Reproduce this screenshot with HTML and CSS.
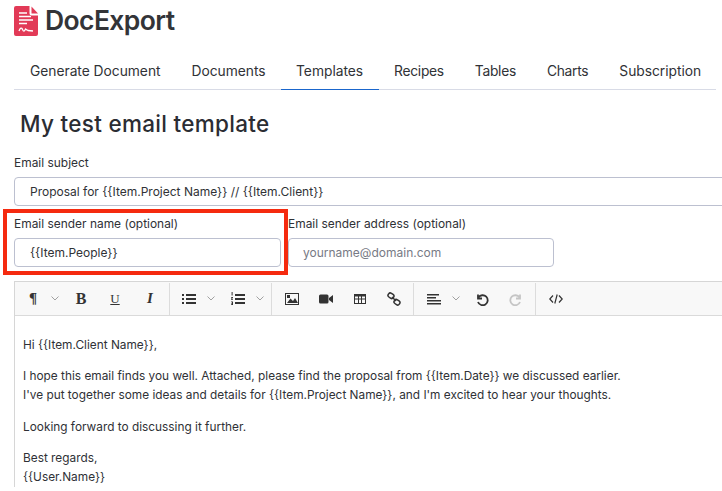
FILE: index.html
```html
<!DOCTYPE html>
<html lang="en">
<head>
<meta charset="utf-8">
<title>DocExport</title>
<link rel="stylesheet" href="styles.css">
</head>
<body>
<div class="page">
  <header class="brand">
    <svg class="logo" viewBox="0 0 24 30" aria-hidden="true">
      <path d="M2 0H15.5V7.5Q15.5 9.500 17.500 9.500H24V28Q24 30 22 30H2Q0 30 0 28V2Q0 0 2 0Z" fill="#e23a57"/>
      <path d="M17.500 0.500L24 7.500H17.500Z" fill="#e23a57"/>
      <path d="M5 7H13M5 10.500H17M5 14H19M5 17.500H13" stroke="#fff" stroke-width="1.500" fill="none"/>
      <path d="M5 25Q7 20 8.500 23.500T11.500 23Q13 24 14 24.500L19 25" stroke="#fff" stroke-width="1.300" fill="none"/>
    </svg>
    <span class="brand-name">DocExport</span>
  </header>

  <nav class="tabs">
    <a class="tab">Generate Document</a>
    <a class="tab">Documents</a>
    <a class="tab active">Templates</a>
    <a class="tab tight">Recipes</a>
    <a class="tab tight">Tables</a>
    <a class="tab tight">Charts</a>
    <a class="tab">Subscription</a>
  </nav>

  <h1 class="title">My test email template</h1>

  <div class="field subject">
    <label class="label">Email subject</label>
    <div class="input wide">Proposal for {{Item.Project Name}} // {{Item.Client}}</div>
  </div>

  <div class="sender-row">
    <div class="field sender">
      <label class="label">Email sender name (optional)</label>
      <div class="input">{{Item.People}}</div>
      <div class="highlight"></div>
    </div>
    <div class="field sender">
      <label class="label">Email sender address (optional)</label>
      <div class="input placeholder">yourname@domain.com</div>
    </div>
  </div>

  <div class="editor">
    <div class="toolbar">
      <div class="group g1">
        <span class="glyph pilcrow">¶</span>
        <svg class="chev" viewBox="0 0 8 5"><path d="M.5.500 4 4 7.500.500"/></svg>
        <span class="glyph bold">B</span>
        <span class="glyph under">U</span>
        <span class="glyph ital">I</span>
      </div>
      <div class="group g2">
        <svg class="ic" viewBox="0 0 14 14"><path class="f" d="M0 2h2v2H0zM0 6h2v2H0zM0 10h2v2H0zM4 2h10v2H4zM4 6h10v2H4zM4 10h10v2H4z"/></svg>
        <svg class="chev" viewBox="0 0 8 5"><path d="M.5.500 4 4 7.500.500"/></svg>
        <svg class="ic" viewBox="0 0 14 14"><path class="f" d="M4 2h10v2H4zM4 6h10v2H4zM4 10h10v2H4zM.6 0h1v3.500h-1zM0 5h2v.8L1 7h1v.8H0V7l1-1.200H0zM0 9.500h2v3.500H0v-.8h1v-.5H.3v-.7H1v-.7H0z"/></svg>
        <svg class="chev" viewBox="0 0 8 5"><path d="M.5.500 4 4 7.500.500"/></svg>
      </div>
      <div class="group g3">
        <svg class="ic" viewBox="0 0 14 12"><path class="f" fill-rule="evenodd" d="M0 0h14v12H0zM1 1v10h12V1z"/><path class="f" d="M2 10 5.500 5.500 8 8l2-3 3 5zM2 2h3v3H2z"/></svg>
        <svg class="ic" viewBox="0 0 14 12"><path class="f" d="M1.500 1.500H8Q9.500 1.500 9.500 3V9Q9.500 10.500 8 10.500H1.500Q0 10.500 0 9V3Q0 1.500 1.500 1.500ZM10 5 14 2V10L10 7Z"/></svg>
        <svg class="ic" viewBox="0 0 14 12"><path class="f" fill-rule="evenodd" d="M1 1h12v10H1zM2 3.500v2h3v-2zM6 3.500v2h2v-2zM9 3.500v2h3v-2zM2 6.500v3.500h3V6.500zM6 6.500v3.500h2V6.500zM9 6.500v3.500h3V6.500z"/></svg>
        <svg class="ic" viewBox="0 0 14 14"><g class="s link"><rect x="1" y="1.500" width="6" height="4.500" rx="2" transform="rotate(35 4 3.700)"/><rect x="7" y="8" width="6" height="4.500" rx="2" transform="rotate(35 10 10.200)"/><path d="M5 5 9 9"/></g></svg>
      </div>
      <div class="group g4">
        <svg class="ic" viewBox="0 0 14 14"><path class="f" d="M0 2h12v1.500H0zM0 5h9v1.500H0zM0 8h14v1.500H0zM0 11h14v1.500H0z"/></svg>
        <svg class="chev" viewBox="0 0 8 5"><path d="M.5.500 4 4 7.500.500"/></svg>
        <svg class="ic" viewBox="0 0 14 14"><g class="s thick"><path d="M3 2.500V6.500H7"/><path d="M3.500 5.500A5 5 0 1 1 3 10"/></g></svg>
        <svg class="ic dim" viewBox="0 0 14 14"><g class="s thick"><path d="M11 2.500V6.500H7"/><path d="M10.500 5.500A5 5 0 1 0 11 10"/></g></svg>
      </div>
      <div class="group g5">
        <svg class="ic" viewBox="0 0 14 12"><g class="s"><path d="M4 2.500 .8 6 4 9.500M10 2.500 13.200 6 10 9.500M8.200 1.500 5.800 10.500"/></g></svg>
      </div>
    </div>
    <div class="body">
      <p>Hi {{Item.Client Name}},</p>
      <p>I hope this email finds you well. Attached, please find the proposal from {{Item.Date}} we discussed earlier.<br>I've put together some ideas and details for {{Item.Project Name}}, and I'm excited to hear your thoughts.</p>
      <p>Looking forward to discussing it further.</p>
      <p>Best regards,<br>{{User.Name}}</p>
    </div>
  </div>
</div>
</body>
</html>
```
FILE: styles.css
```css
* { box-sizing: border-box; }
html, body { margin: 0; padding: 0; height: 491px; overflow: hidden; background: #fff; }
body { font-family: "Inter", "Liberation Sans", sans-serif; color: #2f3136; }
.page { width: 722px; height: 491px; overflow: hidden; padding-left: 14px; }

.brand { display: flex; align-items: center; gap: 7px; height: 43px; padding-bottom: 3px; }
.logo { width: 24px; height: 30px; flex: none; margin-top: 1px; }
.brand-name { font-size: 26.500px; font-weight: 600; color: #333438; letter-spacing: -.6px; }

.tabs { display: flex; width: 702px; height: 47px; padding: 9px 0 0 .5px; border-bottom: 1px solid #d8dbe6; }
.tab { padding: 0 15.500px; height: 38px; line-height: 38px; font-size: 13.800px; color: #303236; white-space: nowrap; letter-spacing: -.02px; }
.tab.tight { letter-spacing: -.28px; }
.tab.active { margin-left: -.5px; border-bottom: 1px solid #1a66cc; }

.title { margin: 20px 0 0 6px; font-size: 22.500px; line-height: 27px; font-weight: 500; color: #2b2d33; letter-spacing: .3px; }

.field { display: flex; flex-direction: column; }
.label { font-size: 11.950px; line-height: 16px; color: #2f3136; white-space: nowrap; }
.subject { margin-top: 18px; }
.input { height: 29px; margin-top: 6px; padding: 0 15px; line-height: 27px; border: 1px solid #bcc0d0; border-radius: 4px; font-size: 12px; color: #303236; background: #fff; white-space: nowrap; }
.input.wide { width: 760px; }
.input.placeholder { padding-left: 14px; color: #777a85; }

.sender-row { display: flex; gap: 7px; margin-top: 10px; }
.sender { position: relative; width: 267px; }
.sender + .sender { width: 266px; }
.highlight { position: absolute; left: -11px; top: -7px; width: 285px; height: 66px; border: 4px solid #f52a0f; pointer-events: none; }

.editor { width: 760px; margin-top: 14px; border: 1px solid #d6d6d6; border-right: 0; border-bottom: 0; }
.toolbar { display: flex; align-items: center; height: 34px; background: #f8f8f8; border-bottom: 1px solid #dadada; }
.group { display: flex; align-items: center; height: 32px; border-right: 1px solid #dcdcdc; flex: none; }
.g1 { width: 155px; }
.g2 { width: 102px; }
.g3 { width: 142px; }
.g4 { width: 122px; }
.g5 { width: 40px; border-right: 0; }
.glyph { font-family: "Liberation Serif", serif; font-size: 15px; color: #333; width: 14px; text-align: center; flex: none; }
.pilcrow { margin-left: 11px; font-weight: 700; }
.bold { margin-left: 15px; font-size: 16px; font-weight: 700; }
.under { margin-left: 20px; font-size: 13px; text-decoration: underline; }
.ital { margin-left: 21px; font-style: italic; font-weight: 700; }
.chev { width: 8px; height: 5px; margin-left: 11px; flex: none; }
.chev path { fill: none; stroke: #8a8a8a; stroke-width: .8; }
.ic { width: 14px; height: 14px; flex: none; }
.f { fill: #333; }
.s { fill: none; stroke: #333; stroke-width: 1.200; }
.s.thick { stroke-width: 1.800; }
.s.link { stroke-width: 1.500; }
.dim { opacity: .25; }
.g2 .ic:first-child { margin-left: 12px; }
.g2 .chev + .ic { margin-left: 16px; }
.g3 .ic { margin-left: 20px; }
.g3 .ic:first-child { margin-left: 13px; }
.g4 .ic:first-child { margin-left: 13px; }
.g4 .chev + .ic { margin-left: 15px; }
.g4 .dim { margin-left: 20px; }
.g5 .ic { margin-left: 13px; }

.body { padding: 19.500px 8px 0; font-size: 11.850px; line-height: 19px; color: #2f3136; }
.body p { margin: 0 0 12.500px; white-space: nowrap; }
```
